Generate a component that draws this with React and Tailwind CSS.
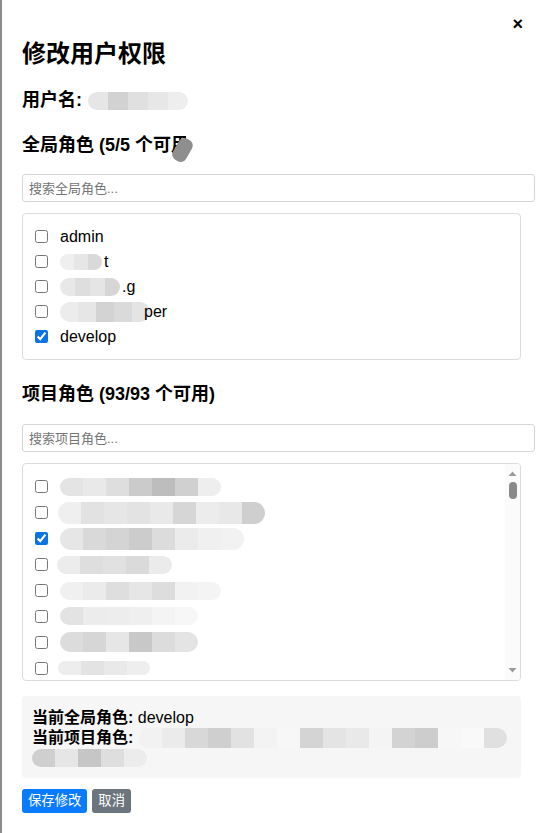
import React from "react";

function Blur({ cells, h = 18, w = 23, className = "" }) {
  return (
    <span
      className={"inline-flex shrink-0 overflow-hidden rounded-full align-middle " + className}
      style={{ height: h }}
    >
      {cells.map((c, i) => (
        <span key={i} className="block h-full" style={{ background: c, width: w }} />
      ))}
    </span>
  );
}

function Check({ checked }) {
  return (
    <input
      type="checkbox"
      defaultChecked={checked}
      className="h-[13px] w-[13px] shrink-0 accent-[#0b74e5]"
    />
  );
}

const projectRows = [
  { checked: false, cells: ["#e4e4e4", "#e9e9e9", "#dedede", "#cbcbcb", "#bdbdbd", "#d0d0d0", "#eeeeee"], h: 18, ml: 0 },
  { checked: false, cells: ["#efefef", "#e2e2e2", "#e6e6e6", "#e3e3e3", "#e9e9e9", "#d6d6d6", "#ececec", "#e8e8e8", "#cfcfcf"], h: 22, ml: -2 },
  { checked: true, cells: ["#e6e6e6", "#d9d9d9", "#d4d4d4", "#cccccc", "#dcdcdc", "#ebebeb", "#f0f0f0", "#f2f2f2"], h: 22, ml: 0 },
  { checked: false, cells: ["#ececec", "#dedede", "#e1e1e1", "#dadada", "#ebebeb"], h: 18, ml: -3 },
  { checked: false, cells: ["#f0f0f0", "#ebebeb", "#dedede", "#e6e6e6", "#dddddd", "#f2f2f2", "#f4f4f4"], h: 18, ml: 0 },
  { checked: false, cells: ["#e3e3e3", "#ececec", "#ededed", "#efefef", "#f4f4f4", "#f7f7f7"], h: 18, ml: 0 },
  { checked: false, cells: ["#dcdcdc", "#d6d6d6", "#e6e6e6", "#c8c8c8", "#dcdcdc", "#e4e4e4"], h: 20, ml: 0 },
  { checked: false, cells: ["#ededed", "#e3e3e3", "#e9e9e9", "#eeeeee"], h: 14, ml: -2 },
];

export default function App() {
  return (
    <div className="relative min-h-[833px] overflow-hidden border-l-2 border-[#8c8c8c] bg-white pl-5 pr-5 pt-[38px] font-['Liberation_Sans','Noto_Sans_CJK_SC',sans-serif] text-black">
      <span className="absolute right-[18px] top-[11px] text-[18px] font-bold leading-[26px]">×</span>

      <h2 className="text-[24px] font-bold leading-[32px]">修改用户权限</h2>

      <div className="mt-[17px] flex items-center text-[18px] font-bold leading-[27px]">
        <span>用户名:</span>
        <Blur className="ml-[6px]" h={18} w={20} cells={["#e6e6e6", "#d2d2d2", "#e0e0e0", "#e7e7e7", "#eeeeee"]} />
      </div>

      <div className="relative mt-[18px] text-[18px] font-bold leading-[27px]">
        <span>全局角色 (5/5 个可用)</span>
        <span className="absolute left-[164px] top-0 h-[27px] w-[50px] bg-white" />
        <span className="absolute left-[170px] top-[-20px] h-[26px] w-[90px] rotate-[-45deg] rounded-full bg-white" />
        <span className="absolute left-[153px] top-[6px] h-[24px] w-[15px] rotate-[30deg] rounded-[6px] bg-[#8e8e8e]" />
      </div>

      <input
        type="text"
        placeholder="搜索全局角色..."
        className="mt-[15px] box-content block h-[26px] w-full rounded-[3px] border border-[#d6d6d6] px-[6px] py-0 text-[13px] placeholder:text-[#757575] outline-none"
      />

      <div className="mt-[11px] h-[147px] rounded-[4px] border border-[#dcdcdc] py-[10px] pl-3 text-[16px]">
        <div className="flex h-[25px] items-center gap-3">
          <Check />
          <span className="pt-[1px]">admin</span>
        </div>
        <div className="flex h-[25px] items-center gap-3">
          <Check />
          <span className="flex items-center pt-[1px]">
            <Blur h={16} w={14} cells={["#efefef", "#e6e6e6", "#d9d9d9"]} />
            <span className="ml-[2px]">t</span>
          </span>
        </div>
        <div className="flex h-[25px] items-center gap-3">
          <Check />
          <span className="flex items-center pt-[1px]">
            <Blur h={18} w={15} cells={["#e8e8e8", "#dedede", "#e5e5e5", "#d6d6d6"]} />
            <span className="ml-[2px]">.g</span>
          </span>
        </div>
        <div className="flex h-[25px] items-center gap-3">
          <Check />
          <span className="flex items-center pt-[1px]">
            <Blur h={20} w={18} cells={["#ececec", "#e6e6e6", "#d3d3d3", "#dadada", "#e4e4e4"]} />
            <span className="-ml-[6px]">per</span>
          </span>
        </div>
        <div className="flex h-[25px] items-center gap-3">
          <Check checked />
          <span className="pt-[1px]">develop</span>
        </div>
      </div>

      <h3 className="mt-[21px] text-[18px] font-bold leading-[27px]">项目角色 (93/93 个可用)</h3>

      <input
        type="text"
        placeholder="搜索项目角色..."
        className="mt-[16px] box-content block h-[26px] w-full rounded-[3px] border border-[#d6d6d6] px-[6px] py-0 text-[13px] placeholder:text-[#757575] outline-none"
      />

      <div className="mt-[11px] flex h-[218px] overflow-hidden rounded-[4px] border border-[#dcdcdc]">
        <div className="flex-1 overflow-hidden pl-3 pt-[10px] text-[16px]">
          {projectRows.map((r, i) => (
            <div key={i} className="flex h-[25.9px] items-center gap-3">
              <Check checked={r.checked} />
              <span style={{ marginLeft: r.ml }} className="flex items-center">
                <Blur h={r.h} w={23} cells={r.cells} />
              </span>
            </div>
          ))}
        </div>
        <div className="flex w-[15px] shrink-0 flex-col items-center bg-[#fbfbfb]">
          <svg width="15" height="14" viewBox="0 0 15 14" className="mt-[3px]">
            <path d="M3.5 9 L7.5 4.5 L11.5 9 Z" fill="#9a9a9a" />
          </svg>
          <div className="mt-[1px] h-[17px] w-[8px] rounded-full bg-[#8a8a8a]" />
          <div className="flex-1" />
          <svg width="15" height="14" viewBox="0 0 15 14" className="mb-[3px]">
            <path d="M3.5 5 L7.5 9.5 L11.5 5 Z" fill="#9a9a9a" />
          </svg>
        </div>
      </div>

      <div className="mt-[15px] h-[82px] rounded-[4px] bg-[#f6f6f6] px-[10px] pt-[11px] text-[16px] leading-[20px]">
        <div className="pt-[1px]">
          <span className="font-bold">当前全局角色:</span> develop
        </div>
        <div className="flex h-[20px] items-center">
          <span className="font-bold">当前项目角色:</span>
          <Blur className="ml-[6px]" h={20} w={23} cells={["#f2f2f2", "#ebebeb", "#d8d8d8", "#cfcfcf", "#e2e2e2", "#f3f3f3", "#f7f7f7", "#d4d4d4", "#e4e4e4", "#e9e9e9", "#f4f4f4", "#d3d3d3", "#cdcdcd", "#f7f7f7", "#f9f9f9", "#e0e0e0"]} />
        </div>
        <div className="flex h-[20px] items-center">
          <Blur h={18} w={23} cells={["#cfcfcf", "#e6e6e6", "#c6c6c6", "#dedede", "#ececec"]} />
        </div>
      </div>

      <div className="mt-[11px] flex gap-[5px]">
        <button className="h-[24px] rounded-[3px] bg-[#0a7bff] px-[6px] text-[13.33px] leading-[24px] text-white">保存修改</button>
        <button className="h-[24px] rounded-[3px] bg-[#6c757d] px-[6px] text-[13.33px] leading-[24px] text-white">取消</button>
      </div>
    </div>
  );
}
